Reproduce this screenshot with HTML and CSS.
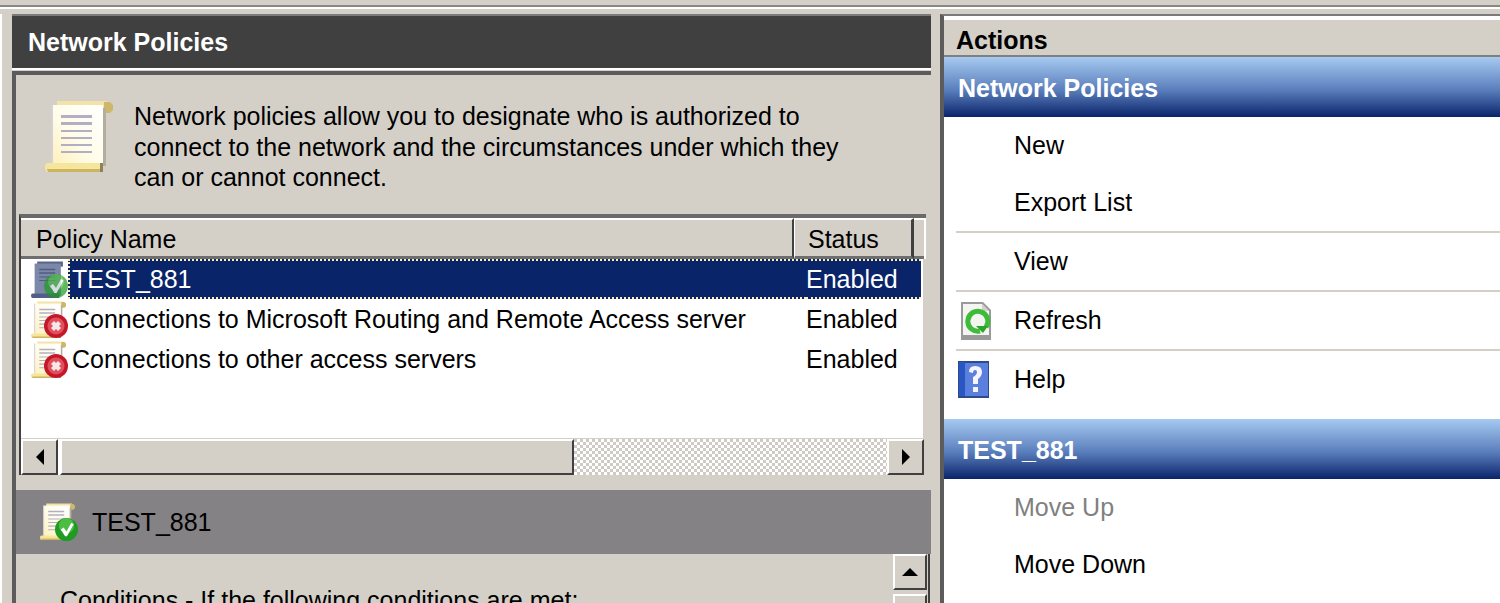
FILE: index.html
```html
<!DOCTYPE html>
<html lang="en">
<head>
    <meta charset="UTF-8">
    <meta name="viewport" content="width=device-width, initial-scale=1.0">
    <title>Network Policies</title>
    <link rel="stylesheet" href="styles.css">
</head>
<body>
    <svg class="defs" width="0" height="0">
        <defs>
            <linearGradient id="paperGrad" x1="1" y1="0" x2="0" y2="1">
                <stop offset="0" stop-color="#ffffff"/>
                <stop offset="0.55" stop-color="#fffce8"/>
                <stop offset="1" stop-color="#fdf0b8"/>
            </linearGradient>
            <symbol id="scroll" viewBox="0 0 68 72">
                <path d="M12 1H62V11H12Z" fill="#f3e3a8"/>
                <path d="M59 2h6l3 3v5l-3 3h-6Z" fill="#cdb768"/>
                <path d="M7 5H58V68H7Z" fill="url(#paperGrad)"/>
                <path d="M58 8h3v58h-3Z" fill="#b3aea0"/>
                <path d="M6 5h2v58H6Z" fill="#d8d0d8"/>
                <path d="M16 15h31v3H16ZM16 22h31v3H16ZM16 30h31v2H16ZM16 37h31v2H16ZM16 44h31v2H16ZM16 51h31v2H16Z" fill="#b4aec4"/>
                <path d="M3 63H55V72H3Q0 72 0 67Q0 63 3 63Z" fill="#f6e59c"/>
                <path d="M2 69H55V72H3Z" fill="#cdb45e"/>
                <path d="M55 63h3v9h-3Z" fill="#8c8460"/>
            </symbol>
            <symbol id="scrollSelected" viewBox="0 0 68 72">
                <path d="M12 1H62V11H12Z" fill="#59658a"/>
                <path d="M7 5H58V68H7Z" fill="#7c88a8"/>
                <path d="M16 15h31v3H16ZM16 22h31v3H16ZM16 30h31v2H16ZM16 37h31v2H16Z" fill="#4f5b80"/>
                <path d="M3 63H55V72H3Q0 72 0 67Q0 63 3 63Z" fill="#525e86"/>
            </symbol>
            <symbol id="badgeError" viewBox="0 0 24 24">
                <circle cx="12" cy="12" r="12" fill="#c4182a"/>
                <circle cx="12" cy="12" r="8.5" fill="#e0505c"/>
                <path d="M7 10l3-3 2 2 2-2 3 3-2 2 2 2-3 3-2-2-2 2-3-3 2-2Z" fill="#f6e8e8"/>
            </symbol>
            <symbol id="badgeOk" viewBox="0 0 24 24">
                <circle cx="12" cy="12" r="12" fill="#1f9a22"/>
                <circle cx="12" cy="8" r="8" fill="#4cbc42"/>
                <path d="M6 12l3-2 3 4 5-9 2.500 1.500L12.500 19H10.500Z" fill="#ffffff"/>
            </symbol>
        </defs>
    </svg>

    <div class="topbar"></div>

    <div class="main">
        <div class="center">
            <h1 class="center-title">Network Policies</h1>
            <div class="center-body">
                <div class="intro">
                    <svg class="intro-icon" width="68" height="72"><use href="#scroll"/></svg>
                    <p>Network policies allow you to designate who is authorized to connect to the network and the circumstances under which they can or cannot connect.</p>
                </div>

                <div class="list">
                    <div class="list-head">
                        <div class="col-name">Policy Name</div>
                        <div class="col-status">Status</div>
                        <div class="col-rest"></div>
                    </div>
                    <div class="list-rows">
                        <div class="row selected">
                            <svg class="row-icon" width="37" height="37">
                                <use href="#scrollSelected" width="35" height="37"/>
                                <use href="#badgeOk" class="dim" x="13" y="13" width="24" height="24"/>
                            </svg>
                            <div class="row-name">TEST_881</div>
                            <div class="row-status">Enabled</div>
                        </div>
                        <div class="row">
                            <svg class="row-icon" width="37" height="37">
                                <use href="#scroll" width="35" height="37"/>
                                <use href="#badgeError" x="13" y="13" width="24" height="24"/>
                            </svg>
                            <div class="row-name">Connections to Microsoft Routing and Remote Access server</div>
                            <div class="row-status">Enabled</div>
                        </div>
                        <div class="row">
                            <svg class="row-icon" width="37" height="37">
                                <use href="#scroll" width="35" height="37"/>
                                <use href="#badgeError" x="13" y="13" width="24" height="24"/>
                            </svg>
                            <div class="row-name">Connections to other access servers</div>
                            <div class="row-status">Enabled</div>
                        </div>
                    </div>
                    <div class="hscroll">
                        <div class="sb-btn"><span class="arrow-left"></span></div>
                        <div class="sb-thumb"></div>
                        <div class="sb-track"></div>
                        <div class="sb-btn"><span class="arrow-right"></span></div>
                    </div>
                </div>

                <div class="detail-head">
                    <svg class="detail-icon" width="38" height="38">
                        <use href="#scroll" width="35" height="37"/>
                        <use href="#badgeOk" x="15" y="15" width="23" height="23"/>
                    </svg>
                    <span>TEST_881</span>
                </div>
                <div class="detail-body">
                    <p class="conditions">Conditions - If the following conditions are met:</p>
                    <div class="vscroll">
                        <div class="sb-btn up"><span class="arrow-up"></span></div>
                        <div class="sb-btn next"></div>
                    </div>
                </div>
            </div>
        </div>

        <div class="actions">
            <div class="actions-title">Actions</div>
            <div class="group-title">Network Policies</div>
            <div class="action">New</div>
            <div class="action">Export List</div>
            <div class="sep"></div>
            <div class="action short">View</div>
            <div class="sep"></div>
            <div class="action short">
                <svg class="action-icon" width="30" height="38" viewBox="0 0 30 38">
                    <path d="M0 0H22L30 8V38H0Z" fill="#9a9a9a"/>
                    <path d="M2 2H21L28 9V33H2Z" fill="#f4f4f0"/>
                    <path d="M21 2l7 7h-7Z" fill="#d0d0cc"/>
                    <path d="M25 25A10 10 0 1 0 19 29" fill="none" stroke="#3fbb3a" stroke-width="5"/>
                    <path d="M15 24h12l-5 7Z" fill="#2aa52a"/>
                </svg>
                Refresh
            </div>
            <div class="sep"></div>
            <div class="action short">
                <svg class="action-icon help" width="31" height="37" viewBox="0 0 31 37">
                    <rect width="31" height="37" fill="#2f4a8c"/>
                    <rect x="1" y="1" width="6" height="34" fill="#2a56c4"/>
                    <rect x="7" y="2" width="23" height="33" fill="#5b7fdc"/>
                    <path d="M11 11Q11 5 17 5Q24 5 24 11Q24 15 20 18V23H15V16Q19 14 19 11Q19 9 17 9Q15 9 15 12Z" fill="#f4f4ff"/>
                    <rect x="15" y="26" width="5" height="5" fill="#f4f4ff"/>
                </svg>
                Help
            </div>
            <div class="group-title second">TEST_881</div>
            <div class="action disabled">Move Up</div>
            <div class="action">Move Down</div>
        </div>
    </div>
</body>
</html>
```

FILE: styles.css
```css
body {
    font-family: "Liberation Sans", Arial, sans-serif;
    font-size: 25px;
    background: #d4d0c8;
    color: #000000;
    margin: 0;
    height: 603px;
    overflow: hidden;
}
p, h1 {
    margin: 0;
}
.defs {
    position: absolute;
}
.topbar {
    height: 5px;
    padding-bottom: 5px;
    border-bottom: 2px solid #ffffff;
    box-sizing: content-box;
    height: 0;
    margin-top: 5px;
    border-top: 2px solid #8a8884;
    margin-bottom: 5px;
    padding: 0;
}
.main {
    display: flex;
    height: 589px;
    border-left: 2px solid #ffffff;
}

/* middle pane */
.center {
    width: 919px;
    margin-left: 10px;
    flex: none;
}
.center-title {
    height: 52px;
    line-height: 53px;
    padding-left: 16px;
    font-size: 25px;
    color: #ffffff;
    background: #404040;
    border-top: 2px solid #7a7a7a;
    border-bottom: 2px solid #ffffff;
}
.center-body {
    border-left: 4px solid #5c5c5c;
    border-top: 4px solid #5c5c5c;
    margin-top: 1px;
}
.intro {
    display: flex;
    height: 139px;
    padding-left: 29px;
    gap: 21px;
}
.intro-icon {
    margin-top: 25px;
    flex: none;
}
.intro p {
    width: 730px;
    padding-top: 26px;
    line-height: 30.500px;
}

.list {
    margin-left: 3px;
    margin-right: 5px;
    border-top: 4px solid #6a6a6a;
    border-left: 2px solid #404040;
    background: #ffffff;
    height: 257px;
    display: flex;
    flex-direction: column;
}
.list-head {
    display: flex;
    height: 41px;
    box-sizing: border-box;
    flex: none;
}
.list-head > div {
    box-sizing: border-box;
    background: #d4d0c8;
    border-top: 2px solid #ffffff;
    border-bottom: 3px solid #6e6e6e;
    line-height: 39px;
}
.col-name {
    width: 773px;
    padding-left: 15px;
    border-right: 2px solid #404040;
}
.col-status {
    width: 120px;
    padding-left: 13px;
    border-left: 1px solid #ffffff;
    border-right: 3px solid #404040;
}
.col-rest {
    flex: 1;
    margin-right: 2px;
}
.list-rows {
    flex: 1;
    padding-right: 2px;
    border-right: 3px solid #d4d0c8;
}
.row {
    display: flex;
    height: 40px;
    align-items: center;
    padding-left: 10px;
}
.row-icon {
    flex: none;
}
.row-name {
    flex: 1;
    padding-left: 4px;
    white-space: nowrap;
    height: 40px;
    line-height: 40px;
    box-sizing: border-box;
}
.row-status {
    width: 115px;
    line-height: 40px;
    height: 40px;
    box-sizing: border-box;
}
.row.selected .row-name,
.row.selected .row-status {
    color: #ffffff;
    background: #0a246a;
    border-top: 2px dotted #fff0b0;
    border-bottom: 2px dotted #fff0b0;
    line-height: 36px;
}
.row.selected .row-name {
    border-left: 2px dotted #fff0b0;
    padding-left: 2px;
}
.dim {
    opacity: 0.7;
}

.hscroll {
    display: flex;
    height: 37px;
    margin-top: auto;
    border-right: 2px solid #d4d0c8;
    border-top: 1px solid #d4d0c8;
    box-sizing: border-box;
    flex: none;
}
.sb-btn {
    width: 37px;
    flex: none;
    box-sizing: border-box;
    background: #d4d0c8;
    border: 2px solid;
    border-color: #ffffff #404040 #404040 #ffffff;
    display: flex;
    align-items: center;
    justify-content: center;
}
.sb-thumb {
    width: 514px;
    flex: none;
    margin-left: 2px;
    box-sizing: border-box;
    background: #d4d0c8;
    border: 2px solid;
    border-color: #ffffff #404040 #404040 #ffffff;
}
.sb-track {
    flex: 1;
    background: conic-gradient(#ffffff 25%, #cfcbc4 0 50%, #ffffff 0 75%, #cfcbc4 0);
    background-size: 6px 6px;
}
.arrow-left, .arrow-right, .arrow-up {
    width: 0;
    height: 0;
    border-style: solid;
    border-color: transparent;
}
.arrow-left {
    border-width: 8px 8px 8px 0;
    border-right-color: #000000;
}
.arrow-right {
    border-width: 8px 0 8px 8px;
    border-left-color: #000000;
}
.arrow-up {
    border-width: 0 8px 8px;
    border-bottom-color: #000000;
}

.detail-head {
    display: flex;
    align-items: center;
    gap: 14px;
    height: 64px;
    margin-top: 15px;
    padding-left: 24px;
    background: #848284;
    border-top: 0;
}
.detail-body {
    display: flex;
    height: 49px;
    overflow: hidden;
    padding-left: 44px;
}
.conditions {
    flex: 1;
    padding-top: 32px;
    white-space: nowrap;
}
.vscroll {
    width: 35px;
    flex: none;
    border-right: 2px solid #404040;
    margin-right: 1px;
}
.vscroll .sb-btn {
    width: 34px;
    height: 36px;
}
.vscroll .next {
    margin-top: 4px;
    height: 30px;
}

/* actions pane */
.actions {
    flex: 1;
    margin-left: 9px;
    background: #ffffff;
    border-left: 4px solid #5c5c5c;
    border-top: 2px solid #7a7a7a;
}
.actions-title {
    height: 41px;
    box-sizing: border-box;
    padding-left: 12px;
    background: #d4d0c8;
    font-weight: bold;
    line-height: 40px;
    border-top: 4px solid #ffffff;
    border-bottom: 2px solid #808080;
}
.group-title {
    height: 60px;
    padding-left: 14px;
    line-height: 63px;
    font-weight: bold;
    color: #ffffff;
    background: linear-gradient(#a6caf0, #5a7ebc 55%, #0a246a);
}
.group-title.second {
    margin-top: 11px;
}
.action {
    display: flex;
    align-items: center;
    height: 57px;
    padding-left: 70px;
    position: relative;
}
.action.short {
    height: 57px;
}
.action.disabled {
    color: #808080;
}
.action-icon {
    position: absolute;
    left: 17px;
    top: 10px;
}
.action-icon.help {
    left: 14px;
}
.sep {
    height: 2px;
    margin-left: 12px;
    background: #d4d0c8;
}
```
